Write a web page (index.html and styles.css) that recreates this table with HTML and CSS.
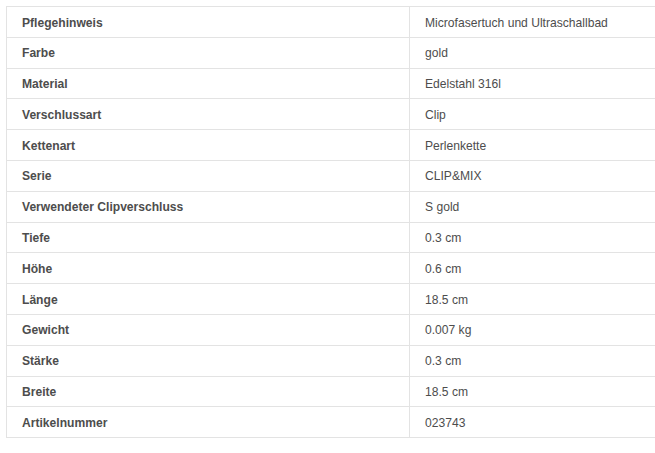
FILE: index.html
```html
<!DOCTYPE html>
<html lang="de">
<head>
<meta charset="utf-8">
<link rel="stylesheet" href="styles.css">
</head>
<body>
<div class="wrap">
<table class="specs">
<tbody>
<tr><th>Pflegehinweis</th><td>Microfasertuch und Ultraschallbad</td></tr>
<tr><th>Farbe</th><td>gold</td></tr>
<tr><th>Material</th><td>Edelstahl 316l</td></tr>
<tr><th>Verschlussart</th><td>Clip</td></tr>
<tr><th>Kettenart</th><td>Perlenkette</td></tr>
<tr><th>Serie</th><td>CLIP&amp;MIX</td></tr>
<tr><th>Verwendeter Clipverschluss</th><td>S gold</td></tr>
<tr><th>Tiefe</th><td>0.3 cm</td></tr>
<tr><th>Höhe</th><td>0.6 cm</td></tr>
<tr><th>Länge</th><td>18.5 cm</td></tr>
<tr><th>Gewicht</th><td>0.007 kg</td></tr>
<tr><th>Stärke</th><td>0.3 cm</td></tr>
<tr><th>Breite</th><td>18.5 cm</td></tr>
<tr><th>Artikelnummer</th><td>023743</td></tr>
</tbody>
</table>
</div>
</body>
</html>
```
FILE: styles.css
```css
html, body {
  margin: 0;
  padding: 0;
  background: #fff;
}
.wrap {
  padding: 6px 0 0 6px;
  overflow: hidden;
}
.specs {
  width: 660px;
  border-collapse: collapse;
  font-family: "Liberation Sans", Arial, sans-serif;
  font-size: 12.1px;
  color: #4d4d4d;
  border: 1px solid #e3e3e3;
}
.specs th,
.specs td {
  border: 1px solid #e3e3e3;
  padding: 7.5px 15px 4.5px 15px;
  line-height: 17.79px;
  text-align: left;
  vertical-align: middle;
}
.specs th {
  width: 372px;
  font-weight: bold;
}
.specs td {
  font-weight: normal;
}
```
